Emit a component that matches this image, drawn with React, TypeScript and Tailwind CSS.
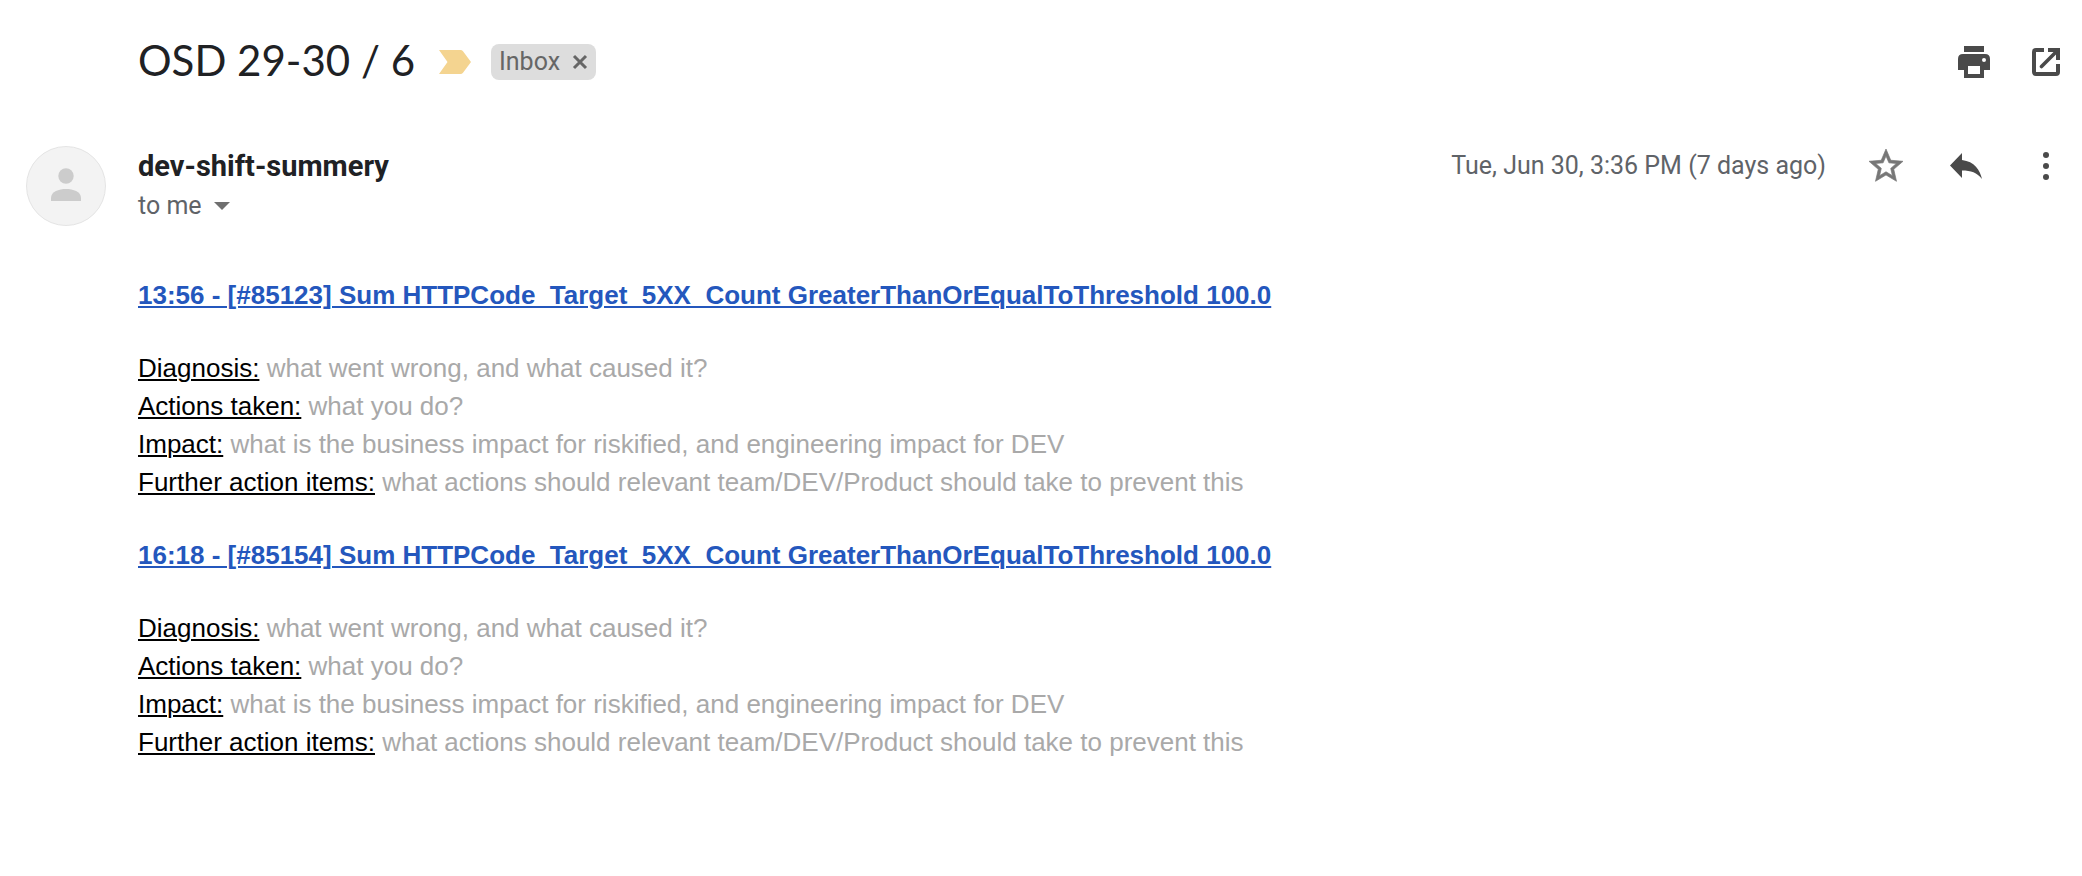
import React from "react";

type Entry = { label: string; text: string };

const entries: Entry[] = [
  { label: "Diagnosis:", text: "what went wrong, and what caused it?" },
  { label: "Actions taken:", text: "what you do?" },
  { label: "Impact:", text: "what is the business impact for riskified, and engineering impact for DEV" },
  { label: "Further action items:", text: "what actions should relevant team/DEV/Product should take to prevent this" },
];

const incidents = [
  "13:56 - [#85123] Sum HTTPCode_Target_5XX_Count GreaterThanOrEqualToThreshold 100.0",
  "16:18 - [#85154] Sum HTTPCode_Target_5XX_Count GreaterThanOrEqualToThreshold 100.0",
];

function IconButton({ label, children }: { label: string; children: React.ReactNode }) {
  return (
    <button type="button" aria-label={label} className="flex size-10 shrink-0 items-center justify-center text-[#4a4a4a]">
      {children}
    </button>
  );
}

function Incident({ title }: { title: string }) {
  return (
    <section>
      <h2 className="font-bold">
        <a href="#incident" className="text-[#2457bd] underline decoration-2 underline-offset-2">{title}</a>
      </h2>
      <div className="mt-[35px]">
        {entries.map((e) => (
          <p key={e.label} className="text-[#a9a9a9]">
            <span className="text-black underline decoration-2 underline-offset-2">{e.label}</span> {e.text}
          </p>
        ))}
      </div>
    </section>
  );
}

export default function App() {
  return (
    <main className="min-h-screen bg-white font-['Roboto','Liberation_Sans',sans-serif] text-[#5f6368]">
      <header className="flex items-center pt-9 pr-4 pl-[138px]">
        <h1 className="pb-1 font-['Lato','Liberation_Sans',sans-serif] text-[42px] leading-[48px] text-[#202124]">OSD 29-30 / 6</h1>
        <button type="button" aria-label="Important" className="ml-6">
          <svg width="32" height="24" viewBox="0 0 32 24" fill="#f4d490">
            <path d="M0 0H21.5Q23 0 24 1.2L32 12L24 22.8Q23 24 21.5 24H0L8.5 12Z" />
          </svg>
        </button>
        <div className="ml-5 flex h-9 items-center gap-3 rounded-lg bg-[#dddddd] px-2 text-[25px] text-[#666666]">
          <span>Inbox</span>
          <button type="button" aria-label="Remove label Inbox">
            <svg width="16" height="16" viewBox="0 0 16 16" fill="none" stroke="#666666" strokeWidth="3">
              <path d="M2 2L14 14M14 2L2 14" />
            </svg>
          </button>
        </div>
        <div className="ml-auto flex gap-8">
          <IconButton label="Print all">
            <svg width="32" height="32" viewBox="0 0 32 32" fill="currentColor">
              <path d="M6 0H26V6H6Z" />
              <path fillRule="evenodd" d="M5 8H27Q32 8 32 13V24H26V32H6V24H0V13Q0 8 5 8ZM10 20V28H22V20ZM26 12A2 2 0 1 0 26 16A2 2 0 1 0 26 12Z" />
            </svg>
          </IconButton>
          <IconButton label="Open in new window">
            <svg width="28" height="28" viewBox="0 0 28 28" fill="none" stroke="currentColor" strokeWidth="4">
              <path d="M12 2H4Q2 2 2 4V24Q2 26 4 26H24Q26 26 26 24V16" />
              <path d="M16 2H26V12" />
              <path d="M9.5 18.5L25.5 2.5" strokeWidth="3.6" strokeLinecap="round" />
            </svg>
          </IconButton>
        </div>
      </header>

      <div className="flex items-start pt-[58px] pr-4 pl-[26px]">
        <svg className="shrink-0" width="80" height="80" viewBox="0 0 80 80">
          <circle cx="40" cy="40" r="39.5" fill="#f3f3f3" stroke="#e4e4e4" />
          <circle cx="40" cy="30" r="7.7" fill="#cccccc" />
          <path d="M25 55V52C25 45.5 33 43 40 43S55 45.5 55 52V55Z" fill="#cccccc" />
        </svg>
        <div className="ml-8">
          <div className="text-[29px] leading-10 font-bold text-[#202124]">dev-shift-summery</div>
          <div className="flex items-center gap-3 text-[25px] leading-10">
            <span>to me</span>
            <button type="button" aria-label="Show details">
              <svg width="16" height="8" viewBox="0 0 16 8" fill="#6f6f6f"><path d="M0 0H16L8 8Z" /></svg>
            </button>
          </div>
        </div>
        <div className="ml-auto flex h-10 items-center">
          <time className="mr-10 text-[25px]">Tue, Jun 30, 3:36 PM (7 days ago)</time>
          <div className="flex gap-10">
            <IconButton label="Star">
              <svg width="34" height="34" viewBox="2 2 20 20" fill="#777777" stroke="#777777" strokeWidth="0.4">
                <path d="M22 9.24l-7.19-.62L12 2 9.19 8.63 2 9.24l5.46 4.73L5.82 21 12 17.27 18.18 21l-1.63-7.03L22 9.24zM12 15.4l-3.76 2.27 1-4.28-3.32-2.88 4.38-.38L12 6.1l1.71 4.04 4.38.38-3.32 2.88 1 4.28L12 15.4z" />
              </svg>
            </IconButton>
            <IconButton label="Reply">
              <svg width="32" height="26" viewBox="0 0 32 26" fill="currentColor">
                <path d="M12 7V0L0 12.5L12 25V17.5C21 17.5 27 19.5 32 26C30 17 24.5 8.5 12 7Z" />
              </svg>
            </IconButton>
            <IconButton label="More">
              <svg width="6" height="28" viewBox="0 0 6 28" fill="currentColor">
                <circle cx="3" cy="3" r="3" /><circle cx="3" cy="14" r="3" /><circle cx="3" cy="25" r="3" />
              </svg>
            </IconButton>
          </div>
        </div>
      </div>

      <article className="flex flex-col gap-[35px] pt-[50px] pr-4 pb-10 pl-[138px] font-['Liberation_Sans',Arial,sans-serif] text-[26px] leading-[38px]">
        {incidents.map((title) => (
          <Incident key={title} title={title} />
        ))}
      </article>
    </main>
  );
}
